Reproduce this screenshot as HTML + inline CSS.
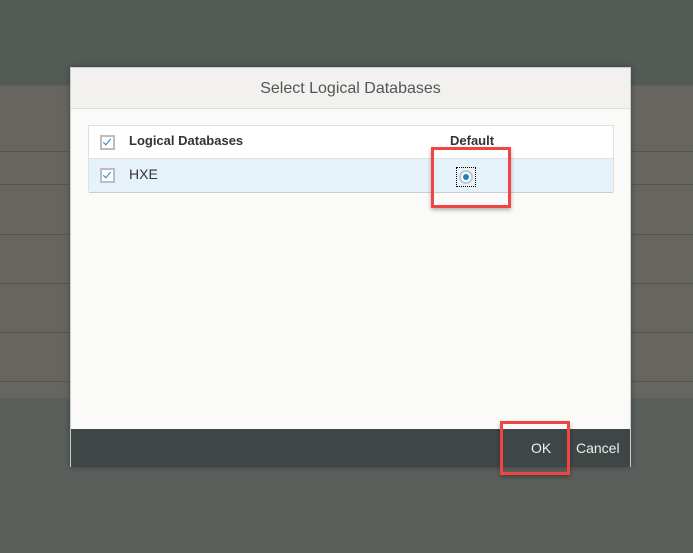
<!DOCTYPE html>
<html><head><style>
body{margin:0;width:693px;height:553px;overflow:hidden;background:#5a5f5b;font-family:"Liberation Sans",sans-serif;position:relative}
.a{position:absolute}
.cb{position:absolute;width:11px;height:11px;border:2px solid #bdbdbd;background:#fff}
.cb:after{content:"";position:absolute;left:3px;top:0px;width:3px;height:7px;border:solid #1a7fc4;border-width:0 1.5px 1.5px 0;transform:rotate(40deg)}
</style></head><body>
<div class="a" style="left:0;top:0;width:693px;height:85px;background:#535b57"></div>
<div class="a" style="left:0;top:86px;width:693px;height:312px;background:#66655f"></div>
<div class="a" style="left:0;top:151px;width:693px;height:1px;background:#555"></div>
<div class="a" style="left:0;top:184px;width:693px;height:1px;background:#555"></div>
<div class="a" style="left:0;top:234px;width:693px;height:1px;background:#555"></div>
<div class="a" style="left:0;top:283px;width:693px;height:1px;background:#555"></div>
<div class="a" style="left:0;top:332px;width:693px;height:1px;background:#555"></div>
<div class="a" style="left:0;top:381px;width:693px;height:1px;background:#555"></div>
<div class="a" style="left:70px;top:67px;width:561px;height:400px;background:#fafaf9;border:1px solid #ccc;box-sizing:border-box;box-shadow:0 0 6px rgba(0,0,0,.3)">
 <div class="a" style="left:0;top:0;width:559px;height:40px;background:#f2f1ef;border-bottom:1px solid #ddd;text-align:center;line-height:41px;font-size:16px;color:#555">Select Logical Databases</div>
 <div class="a" style="left:17px;top:57px;width:526px;height:66px;border:1px solid #e0e0e0;background:#fff;box-sizing:border-box">
  <div class="a" style="left:0;top:32px;width:524px;height:33px;background:#e6f2f9;border-top:1px solid #e0e0e0;border-bottom:1px solid #ccc"></div>
  <div class="cb" style="left:11px;top:9px"></div>
  <div class="a" style="left:40px;top:7px;font-size:13px;font-weight:bold;color:#333">Logical Databases</div>
  <div class="a" style="left:361px;top:7px;font-size:13px;font-weight:bold;color:#333">Default</div>
  <div class="cb" style="left:11px;top:42px"></div>
  <div class="a" style="left:40px;top:40px;font-size:14px;color:#333">HXE</div>
  <div class="a" style="left:367px;top:41px;width:20px;height:20px;border:1px dotted #000;box-sizing:border-box"></div>
  <div class="a" style="left:370px;top:44px;width:14px;height:14px;border-radius:50%;border:2px solid #c8c8c8;box-sizing:border-box;background:#fff"></div>
  <div class="a" style="left:374px;top:48px;width:6px;height:6px;border-radius:50%;background:#1a7fc4"></div>
 </div>
 <div class="a" style="left:0;top:361px;width:559px;height:38px;background:#3f4646"></div>
 <div class="a" style="left:460px;top:372px;font-size:14px;color:#eee">OK</div>
 <div class="a" style="left:505px;top:372px;font-size:14px;color:#eee">Cancel</div>
</div>
<div class="a" style="left:431px;top:147px;width:80px;height:61px;border:3px solid #f04545;box-sizing:border-box;box-shadow:0 2px 4px rgba(0,0,0,.3)"></div>
<div class="a" style="left:500px;top:421px;width:70px;height:54px;border:3px solid #f04545;box-sizing:border-box;box-shadow:0 2px 4px rgba(0,0,0,.3)"></div>
</body></html>
